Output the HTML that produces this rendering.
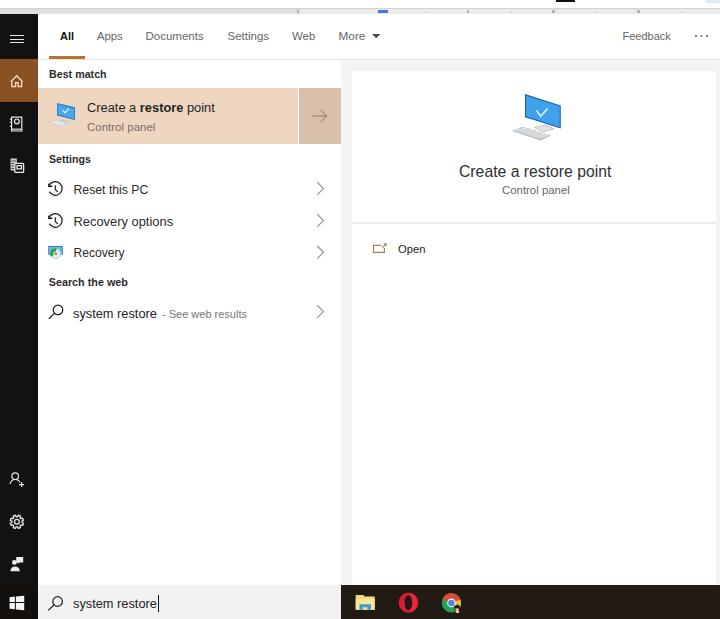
<!DOCTYPE html>
<html><head><meta charset="utf-8">
<style>
*{margin:0;padding:0;box-sizing:border-box}
html,body{width:720px;height:619px;overflow:hidden;background:#fff;font-family:"Liberation Sans",sans-serif;color:#222}
.a{position:absolute}
.t{position:absolute;white-space:nowrap;line-height:1}
</style></head><body>
<!-- top ruler -->
<div class="a" style="left:0;top:0;width:720px;height:8px;background:#fff"></div>
<div class="a" style="left:556px;top:0;width:19px;height:2px;background:#111"></div>
<div class="a" style="left:706px;top:0;width:14px;height:3px;background:#dde9f7"></div>
<div class="a" style="left:0;top:8px;width:720px;height:6px;background:#ebebeb;border-top:1px solid #d2d2d2"></div>
<div class="a" style="left:0;top:9px;width:300px;height:5px;background:#dedede"></div>
<div class="a" style="left:297px;top:10px;width:2px;height:3px;background:#b4b4b4"></div>
<div class="a" style="left:425px;top:11px;width:1px;height:2px;background:#d0d0d0"></div>
<div class="a" style="left:467px;top:10px;width:2px;height:3px;background:#b4b4b4"></div>
<div class="a" style="left:511px;top:11px;width:1px;height:2px;background:#d0d0d0"></div>
<div class="a" style="left:552px;top:10px;width:3px;height:3px;background:#b4b4b4"></div>
<div class="a" style="left:596px;top:11px;width:1px;height:2px;background:#d0d0d0"></div>
<div class="a" style="left:637px;top:10px;width:3px;height:3px;background:#b4b4b4"></div>
<div class="a" style="left:681px;top:11px;width:1px;height:2px;background:#d0d0d0"></div>
<div class="a" style="left:378px;top:10px;width:10px;height:3px;background:#4a78d0"></div>

<!-- sidebar -->
<div class="a" style="left:0;top:14px;width:38px;height:605px;background:#121212"></div>
<div class="a" style="left:0;top:585px;width:38px;height:34px;background:#130f0d"></div>
<div class="a" style="left:0;top:59px;width:38px;height:43px;background:#8a5122"></div>

<!-- left panel -->
<div class="a" style="left:38px;top:14px;width:303px;height:571px;background:#fff"></div>
<!-- right panel -->
<div class="a" style="left:342px;top:14px;width:378px;height:45px;background:#fff"></div>
<div class="a" style="left:38px;top:59px;width:682px;height:1px;background:#e3e3e3"></div>
<div class="a" style="left:341px;top:60px;width:379px;height:525px;background:#f4f4f4"></div>
<div class="a" style="left:352px;top:71px;width:364px;height:514px;background:#fff"></div>
<div class="a" style="left:352px;top:222px;width:364px;height:2px;background:#ececec"></div>

<!-- search box + taskbar -->
<div class="a" style="left:38px;top:585px;width:303px;height:34px;background:#f2f2f2"></div>
<div class="a" style="left:341px;top:585px;width:379px;height:34px;background:#221a15"></div>

<!-- tabs -->
<div class="t" style="left:60px;top:31px;font-size:11px;font-weight:bold;color:#111">All</div>
<div class="t" style="left:97px;top:31px;font-size:11.3px;color:#666">Apps</div>
<div class="t" style="left:145.5px;top:31px;font-size:11.5px;color:#666">Documents</div>
<div class="t" style="left:227.5px;top:31px;font-size:11.5px;color:#666">Settings</div>
<div class="t" style="left:292px;top:31px;font-size:11.4px;color:#666">Web</div>
<div class="t" style="left:338.5px;top:31px;font-size:11.8px;color:#666">More</div>
<div class="t" style="left:622.5px;top:31px;font-size:11px;color:#666">Feedback</div>
<div class="a" style="left:49px;top:55.5px;width:36px;height:3.5px;background:#b8742f"></div>

<!-- best match -->
<div class="t" style="left:49px;top:69px;font-size:10.7px;font-weight:bold;color:#2c2c2c">Best match</div>
<div class="a" style="left:38px;top:88px;width:260px;height:56px;background:#efd6c1"></div>
<div class="a" style="left:299px;top:88px;width:42px;height:56px;background:#d8c0ab"></div>
<div class="t" style="left:87px;top:102px;font-size:12.85px;color:#222">Create a <b>restore</b> point</div>
<div class="t" style="left:87px;top:121.5px;font-size:11.5px;color:#7a6e66">Control panel</div>

<!-- settings -->
<div class="t" style="left:49px;top:153.5px;font-size:10.6px;font-weight:bold;color:#2c2c2c">Settings</div>
<div class="t" style="left:73.5px;top:184.3px;font-size:12.25px;color:#2a2a2a">Reset this PC</div>
<div class="t" style="left:73.5px;top:215.6px;font-size:12.9px;color:#2a2a2a">Recovery options</div>
<div class="t" style="left:73.5px;top:247.4px;font-size:12.1px;color:#2a2a2a">Recovery</div>
<div class="t" style="left:48.7px;top:277px;font-size:10.8px;font-weight:bold;color:#2c2c2c">Search the web</div>
<div class="t" style="left:73px;top:307.5px;font-size:12.8px;color:#222">system restore <span style="font-size:11px;color:#777;margin-left:1.5px">- See web results</span></div>

<!-- card -->
<div class="t" style="left:459px;top:164.4px;font-size:15.75px;color:#303030">Create a restore point</div>
<div class="t" style="left:502px;top:185px;font-size:11.4px;color:#666">Control panel</div>
<div class="t" style="left:398px;top:243.5px;font-size:11.2px;color:#222">Open</div>

<!-- search box text -->
<div class="t" style="left:73px;top:598px;font-size:12.8px;color:#222">system restore</div>
<div class="a" style="left:158px;top:595px;width:1px;height:17px;background:#111"></div>

<svg class="a" style="left:0;top:0" width="720" height="619" viewBox="0 0 720 619">
<!-- hamburger -->
<g stroke="#e6e6e6" stroke-width="1.2" fill="none">
<path d="M10 35.5H24M10 39.5H24M10 42.5H24"/>
</g>
<!-- home -->
<g stroke="#f3dac2" stroke-width="1.3" fill="none" stroke-linejoin="miter">
<path d="M10.8 81.8L16.7 75.8L22.6 81.8M11.8 80.8V86.5H15.6V82.6H18.1V86.5H21.7V80.8"/>
</g>
<!-- notebook -->
<g stroke="#e8e8e8" stroke-width="1.2" fill="none" transform="translate(0 0.6)">
<path d="M11.6 116.6H21.8V130.4H11.6Z"/>
<path d="M11.6 128.6H21.8"/>
<circle cx="16.9" cy="120.8" r="2.4"/>
<path d="M9.8 118.5H11.6M9.8 121.5H11.6M9.8 125.8H11.6"/>
</g>
<!-- docs -->
<g fill="#cfcfcf">
<path d="M10.6 158.6H16.8V163H14.6V170.6H10.6Z"/>
</g>
<g stroke="#121212" stroke-width="0.7">
<path d="M11.4 161H16M11.4 163.5H14.2M11.4 166H14.2M11.4 168.5H14.2"/>
</g>
<g stroke="#ececec" stroke-width="1.3" fill="none">
<rect x="14.8" y="163.4" width="8.8" height="9" rx="1"/>
<path d="M17 165.6H21.4V168.8H17Z"/>
</g>
<!-- person add -->
<g stroke="#e8e8e8" stroke-width="1.2" fill="none">
<circle cx="15.2" cy="476.2" r="3.3"/>
<path d="M10 484.2C10.8 480.8 13 479.5 15.2 479.5C17.4 479.5 19.2 480.6 20 482.6"/>
<path d="M21.6 482.2V487M19.2 484.6H24"/>
</g>
<!-- gear -->
<g stroke="#e8e8e8" stroke-width="1.3" fill="none" stroke-linejoin="round">
<circle cx="16.9" cy="521.8" r="2.4"/>
<path d="M17.57 516.74 L18.37 515.16 L20.55 516.06 L20.00 517.75 L20.95 518.70 L22.64 518.15 L23.54 520.33 L21.96 521.13 L21.96 522.47 L23.54 523.27 L22.64 525.45 L20.95 524.90 L20.00 525.85 L20.55 527.54 L18.37 528.44 L17.57 526.86 L16.23 526.86 L15.43 528.44 L13.25 527.54 L13.80 525.85 L12.85 524.90 L11.16 525.45 L10.26 523.27 L11.84 522.47 L11.84 521.13 L10.26 520.33 L11.16 518.15 L12.85 518.70 L13.80 517.75 L13.25 516.06 L15.43 515.16 L16.23 516.74Z"/>
</g>
<!-- feedback -->
<g fill="#ededed">
<circle cx="14.4" cy="562.4" r="2.4"/>
<path d="M10.4 571.2C10.4 568 12.4 566.4 15.1 566.4C17.8 566.4 19.8 568 19.8 571.2Z"/>
<path d="M16.2 557H23.2V562.4H19.5L17.5 563.8V562.4H16.2Z"/>
</g>
<!-- windows -->
<g fill="#f4f4f4">
<path d="M9.6 597.2L14.9 596.6V601.9H9.6Z"/>
<path d="M15.9 596.5L24.2 595.7V601.9H15.9Z"/>
<path d="M9.6 602.9H14.9V609.3L9.6 608.7Z"/>
<path d="M15.9 602.9H24.2V610.3L15.9 609.4Z"/>
</g>
</svg>

<svg class="a" style="left:0;top:0" width="720" height="619" viewBox="0 0 720 619">
<!-- dropdown & dots -->
<path d="M372 34H380.4L376.2 38.2Z" fill="#4a4a4a"/>
<g fill="#808080"><rect x="695" y="35" width="2" height="2"/><rect x="700.5" y="35" width="2" height="2"/><rect x="706" y="35" width="2" height="2"/></g>
<!-- arrow -->
<g stroke="#8a7664" stroke-width="1" fill="none">
<path d="M312.5 116.1H326.5M320.6 110L326.7 116.1L320.6 122.2"/>
</g>
<!-- chevrons -->
<g stroke="#8c8c8c" stroke-width="1.05" fill="none">
<path d="M317.1 182.2L323.6 188.5L317.1 194.8"/>
<path d="M317.1 214.2L323.6 220.5L317.1 226.8"/>
<path d="M317.1 246L323.6 252.3L317.1 258.6"/>
<path d="M317.1 305.3L323.6 311.6L317.1 317.9"/>
</g>
<!-- history icons -->
<g stroke="#1e1e1e" stroke-width="1.2" fill="none">
<path d="M49.6 184.8A6.8 6.8 0 1 1 49.3 191.6"/>
<path d="M55.3 185.2V189.6L57.9 191.7"/>
<path d="M49.6 216.8A6.8 6.8 0 1 1 49.3 223.6"/>
<path d="M55.3 217.2V221.6L57.9 223.7"/>
</g>
<g stroke="#111" stroke-width="1.5" fill="none">
<path d="M48.9 183.4V186.3H52.2"/>
<path d="M48.9 215.4V218.3H52.2"/>
</g>
<!-- search icons -->
<g stroke="#1e1e1e" stroke-width="1.2" fill="none">
<circle cx="58" cy="309.9" r="4.8"/>
<path d="M54.4 313.4L48.8 318.8"/>
<circle cx="57.6" cy="601.5" r="4.8"/>
<path d="M54 605L48.2 610.4"/>
</g>
<!-- recovery icon -->
<g>
<rect x="48.2" y="245.9" width="14.7" height="8.8" fill="#3f7fb8"/>
<rect x="49" y="247" width="13.1" height="7" fill="#66b6e6"/>
<circle cx="55.4" cy="253.4" r="5.3" fill="#e6ecee" stroke="#9aaab0" stroke-width="0.5"/>
<path d="M51.34 256.81A5.3 5.3 0 0 1 56.77 248.28L55.92 251.47A2.0 2.0 0 0 0 53.87 254.69Z" fill="#2aa548"/>
<circle cx="55.8" cy="253.6" r="1.2" fill="#7a6a80"/>
</g>
<!-- small monitor -->
<g>
<path d="M57 103L75 107.2V120L57 115.5Z" fill="#2f7fc4"/>
<path d="M58 104.6L74 108.4V118.6L58 114.6Z" fill="#48a8ec"/>
<path d="M62.8 110.4L65 112.8L69 108.6" stroke="#fff" stroke-width="1.1" fill="none"/>
<path d="M62 119.2L70 121.2L67 123.2L59 121.2Z" fill="#c8ccd0"/>
<path d="M49 122L56.5 119.6L68 123.6L60.5 126.6Z" fill="#c4c6c8"/>
<path d="M50 122L56.5 120.2L67 123.6L60.5 125.9Z" fill="#e8e8e8"/>
</g>
<!-- big monitor -->
<g>
<path d="M512 130.9L522.4 126.8L551 135.3L540.7 140.4Z" fill="#aeb3b8"/>
<path d="M512.6 130.6L522.4 127.2L550 135.1L540.5 139.3Z" fill="#e6e8ea"/>
<path d="M515.5 129.8L545.5 138.2M518.8 128.6L548 136.8M513.8 130.4L542 138.8M520 128.5L524 127.4M526 130.2L530 129M532 132L536 130.8M538 133.8L542 132.6" stroke="#bfc3c7" stroke-width="0.7"/>
<path d="M533.3 127.2L545 124.5L554.7 129L543 132Z" fill="#aeb3b8"/>
<path d="M534.5 127.4L545 125.2L553 129L543 131.2Z" fill="#e2e4e6"/>
<path d="M525 94.1L560.8 105.4V128.5L525 117.2Z" fill="#1f65a8"/>
<path d="M526.1 95.7L559.7 106.3V126.9L526.1 116.2Z" fill="#3ea2ee"/>
<path d="M536.4 110.4L540.6 116.2L547.7 108.5" stroke="#e4f6ff" stroke-width="1.5" fill="none"/>
</g>
<!-- open icon -->
<g stroke="#9a8458" stroke-width="1.2" fill="none">
<path d="M381.3 245.4H373.5V252.4H384.4V248"/>
<path d="M382.3 247.7L385.5 244.5"/>
</g>
<path d="M383.6 243.4L386.6 243.3L386.5 246.3Z" fill="#8a7a5a"/>
<!-- folder -->
<g>
<path d="M355.7 595H363.5L364.8 596.4H374.7V609.8H355.7Z" fill="#f3d878"/>
<path d="M355.7 598.5H374.7V609.8H355.7Z" fill="#f8e49a"/>
<path d="M359.5 604.3H371V609.8H367.4V607.3H363V609.8H359.5Z" fill="#3a9fd0"/>
</g>
<!-- opera -->
<g>
<ellipse cx="408.5" cy="602.7" rx="9.8" ry="10.1" fill="#dd1a32"/>
<ellipse cx="410" cy="602.7" rx="7" ry="9.2" fill="#e83a4e" opacity="0.5"/>
<ellipse cx="408.3" cy="602.7" rx="4" ry="7.6" fill="#4a0c12"/>
<ellipse cx="408.3" cy="602.7" rx="2.8" ry="6.6" fill="#221614"/>
</g>
<!-- chrome -->
<g>
<circle cx="451.4" cy="602.9" r="9.6" fill="#23a455"/>
<path d="M442.5 599.2A9.6 9.6 0 0 1 460.4 599.5L451.4 602.9Z" fill="#dc4a3c"/>
<path d="M460.4 599.5A9.6 9.6 0 0 1 456 611.3L451.4 602.9Z" fill="#f4b93a"/>
<circle cx="451.4" cy="602.9" r="4.3" fill="#f4f4f4"/>
<circle cx="451.4" cy="602.9" r="3.2" fill="#4a86e4"/>
<path d="M454 606L458 604.5L461 608L459.5 613H455Z" fill="#2a1c16"/>
<path d="M455.3 608.5L458.5 608.2L459.3 613H455.8Z" fill="#e6c4a6"/>
</g>
</svg>
</body></html>
